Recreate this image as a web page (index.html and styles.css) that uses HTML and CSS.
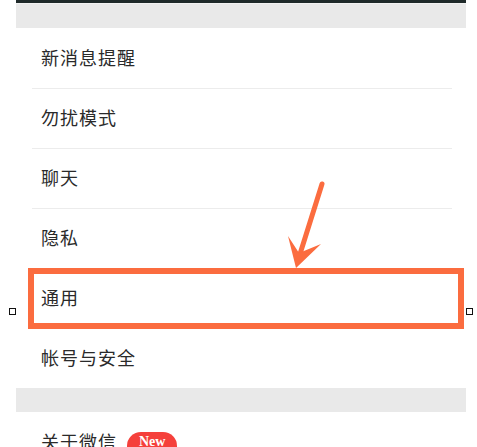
FILE: index.html
```html
<!DOCTYPE html>
<html lang="zh-CN">

<head>
    <meta charset="UTF-8">
    <meta name="viewport" content="width=device-width, initial-scale=1.0">
    <title>设置</title>
    <link rel="stylesheet" href="styles.css">
</head>

<body>
    <div class="page">
        <div class="topbar"></div>
        <div class="gap"></div>
        <div class="group">
            <div class="row">新消息提醒</div>
            <div class="row">勿扰模式</div>
            <div class="row">聊天</div>
            <div class="row">隐私</div>
            <div class="row">通用</div>
            <div class="row">帐号与安全</div>
        </div>
        <div class="gap"></div>
        <div class="group">
            <div class="row">关于微信 <span class="badge">New</span></div>
        </div>

        <!-- annotation -->
        <div class="highlight"></div>
        <div class="handle handle-left"></div>
        <div class="handle handle-right"></div>
        <svg class="arrow" width="477" height="447" viewBox="0 0 477 447">
            <line x1="322" y1="184" x2="300" y2="254" stroke="#fb6c3f" stroke-width="5" stroke-linecap="round" />
            <path d="M296 268 L288 236 L299 253 L321 244 Z" fill="#fb6c3f" />
        </svg>
    </div>
</body>

</html>
```

FILE: styles.css
```css
body {
    margin: 0;
    background-color: #fff;
    font-family: "Noto Sans CJK SC", "Noto Sans", sans-serif;
}

.page {
    position: relative;
    width: 477px;
    height: 447px;
    overflow: hidden;
}

.topbar {
    margin: 0 11px 0 16px;
    height: 3px;
    background-color: #1f2a2a;
    border-bottom: 1px solid #f2f2f2;
}

.gap {
    margin: 0 11px 0 16px;
    height: 24px;
    background-color: #e9e9e9;
}

.group {
    margin: 0 11px 0 16px;
    background-color: #fff;
}

.row {
    display: flex;
    align-items: center;
    height: 60px;
    margin: 0 14px 0 16px;
    padding-left: 9px;
    padding-bottom: 3px;
    font-size: 18px;
    letter-spacing: 1px;
    color: #2a2a2a;
    box-sizing: border-box;
}

.row + .row {
    border-top: 1px solid #ececec;
}

.badge {
    display: inline-block;
    margin-left: 10px;
    margin-top: 10px;
    padding: 0 12px;
    height: 28px;
    line-height: 20px;
    border-radius: 14px;
    background-color: #f5403b;
    color: #fff;
    font-family: "Liberation Serif", serif;
    font-weight: bold;
    font-size: 14px;
    letter-spacing: 0;
}

.highlight {
    position: absolute;
    left: 28px;
    top: 268px;
    width: 424px;
    height: 49px;
    border: 6px solid #fb6c3f;
}

.handle {
    position: absolute;
    top: 308px;
    width: 5px;
    height: 5px;
    border: 1px solid #111;
    background-color: #fff;
}

.handle-left {
    left: 9px;
}

.handle-right {
    left: 466px;
}

.arrow {
    position: absolute;
    left: 0;
    top: 0;
}
```
